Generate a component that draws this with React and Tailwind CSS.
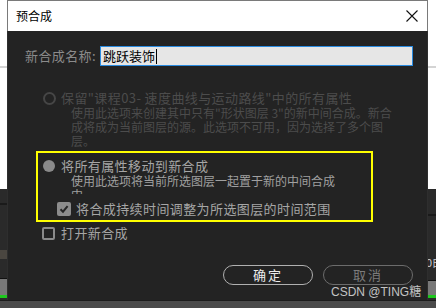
import React from 'react'

const FONT = { fontFamily: '"Noto Sans CJK SC", "Noto Sans", sans-serif' }

function LeftStrip() {
  return (
    <div className="w-[7px] flex flex-col shrink-0">
      <div className="h-[66px] bg-white" />
      <div className="h-[2px] bg-[#d4d4d4]" />
      <div className="h-[121px] bg-white" />
      <div className="h-[14px] bg-[#2a2a2a]" />
      <div className="h-[2px] bg-[#1a1a1a]" />
      <div className="h-[45px] bg-[#2a2a2a]" />
      <div className="h-[9px] bg-[#4a4640]" />
      <div className="h-[19px] bg-[#2a2a2a]" />
      <div className="h-[1px] bg-[#111111]" />
      <div className="h-[16px] bg-[#787878]" />
      <div className="h-[3px] bg-[#1ec81e]" />
      <div className="flex-1 bg-[#2a2a2a]" />
    </div>
  )
}

function RightStrip() {
  return (
    <div className="w-[8px] flex flex-col shrink-0">
      <div className="h-[66px] bg-white" />
      <div className="h-[2px] bg-[#d4d4d4]" />
      <div className="h-[121px] bg-white" />
      <div className="h-[25px] bg-[#2a2a2a]" />
      <div className="h-[2px] bg-[#1a1a1a]" />
      <div className="h-[40px] bg-[#2a2a2a]" />
      <div className="h-[13px] bg-[#2a2a2a] overflow-hidden text-[11px] leading-[13px] text-[#d0d0d0] whitespace-nowrap">
        <span className="-ml-[2px]">0白</span>
      </div>
      <div className="h-[11px] bg-[#2a2a2a]" />
      <div className="h-[1px] bg-[#111111]" />
      <div className="h-[14px] bg-[#787878]" />
      <div className="h-[3px] bg-[#1ec81e]" />
      <div className="flex-1 bg-[#2a2a2a]" />
    </div>
  )
}

function Check() {
  return (
    <svg width="10" height="10" viewBox="0 0 10 10">
      <path d="M1.5 5.2 L4 7.7 L8.6 2.2" fill="none" stroke="#262626" strokeWidth="2" />
    </svg>
  )
}

export default function App() {
  return (
    <div className="w-[436px] h-[308px] flex flex-col overflow-hidden bg-[#2a2a2a]" style={FONT}>
      <div className="flex h-[300px]">
        <LeftStrip />

        <div className="w-[421px] flex flex-col shrink-0">
          <div className="h-[31px] bg-white border-t border-x border-[#7a7a7a] flex items-center justify-between pl-[8px] pr-[9px]">
            <span className="text-[12px] text-black">预合成</span>
            <svg width="12" height="12" viewBox="0 0 12 12">
              <path d="M0.5 0.5 L11.5 11.5 M11.5 0.5 L0.5 11.5" stroke="#111" strokeWidth="1.1" />
            </svg>
          </div>

          <div className="relative flex-1 bg-[#232323] border-x border-[#2e2e2e] pt-[15px]">
            <div className="flex items-center h-[20px] pl-[17px]">
              <span className="w-[75px] text-[13px] tracking-[0.4px] text-[#8b8b8b] whitespace-nowrap">新合成名称:</span>
              <div className="w-[313px] h-[20px] border border-[#2a8be0] bg-[#e6e6e6] flex items-center pl-[2px] text-[13px] text-black">
                <span>跳跃装饰</span>
                <span className="w-px h-[15px] bg-black ml-px" />
              </div>
            </div>

            <div className="mt-[24px] flex items-center h-[16px] pl-[35px]">
              <span className="w-[13px] h-[13px] rounded-full border-2 border-[#464646]" />
              <span className="ml-[5px] text-[13px] tracking-[0.4px] text-[#4c4c4c] whitespace-nowrap">保留"课程03- 速度曲线与运动路线"中的所有属性</span>
            </div>
            <div className="pl-[63px] text-[12px] leading-[14px] text-[#4c4c4c] whitespace-nowrap">
              <div>使用此选项来创建其中只有"形状图层 3"的新中间合成。新合</div>
              <div>成将成为当前图层的源。此选项不可用，因为选择了多个图</div>
              <div>层。</div>
            </div>

            <div className="mt-[3px] ml-[28px] w-[337px] border-2 border-[#ffff00] pt-[4px] pb-[3px]">
              <div className="flex items-center h-[17px] pl-[5px]">
                <span className="w-[12px] h-[12px] rounded-full bg-[#8a8a8a]" />
                <span className="ml-[6px] text-[13px] tracking-[0.4px] text-[#a6a6a6] whitespace-nowrap">将所有属性移动到新合成</span>
              </div>
              <div className="h-[20px] overflow-hidden pl-[33px] text-[12px] leading-[14px] text-[#a0a0a0] whitespace-nowrap">
                <div>使用此选项将当前所选图层一起置于新的中间合成</div>
                <div>中。</div>
              </div>
              <div className="mt-[7px] flex items-center h-[16px] pl-[19px]">
                <span className="w-[14px] h-[14px] rounded-[2px] bg-[#8c8c8c] flex items-center justify-center">
                  <Check />
                </span>
                <span className="ml-[5px] text-[13px] tracking-[0.4px] text-[#a6a6a6] whitespace-nowrap">将合成持续时间调整为所选图层的时间范围</span>
              </div>
            </div>

            <div className="mt-[3px] flex items-center h-[16px] pl-[34px]">
              <span className="w-[13px] h-[13px] rounded-[2px] border-2 border-[#8a8a8a]" />
              <span className="ml-[6px] text-[13px] tracking-[0.4px] text-[#a6a6a6] whitespace-nowrap">打开新合成</span>
            </div>

            <div className="mt-[24px] flex gap-[10px] pl-[215px]">
              <div className="w-[90px] h-[20px] rounded-full border-[1.5px] border-[#b0b0b0] flex items-center justify-center text-[13px] tracking-[2px] text-[#ececec]">确定</div>
              <div className="w-[90px] h-[20px] rounded-full border-[1.5px] border-[#6c6c6c] flex items-center justify-center text-[13px] tracking-[2px] text-[#7c7c7c]">取消</div>
            </div>

            <div
              className="absolute left-[323px] top-[253px] text-[12px] leading-[16px] text-[#c4c4c4] whitespace-nowrap"
              style={{ fontFamily: '"Liberation Sans", "Noto Sans CJK SC", sans-serif' }}
            >
              CSDN @TING糖
            </div>
          </div>
        </div>

        <RightStrip />
      </div>
      <div className="h-[8px] bg-[#4b4b4b] border-t border-[#1c1c1c]" />
    </div>
  )
}
